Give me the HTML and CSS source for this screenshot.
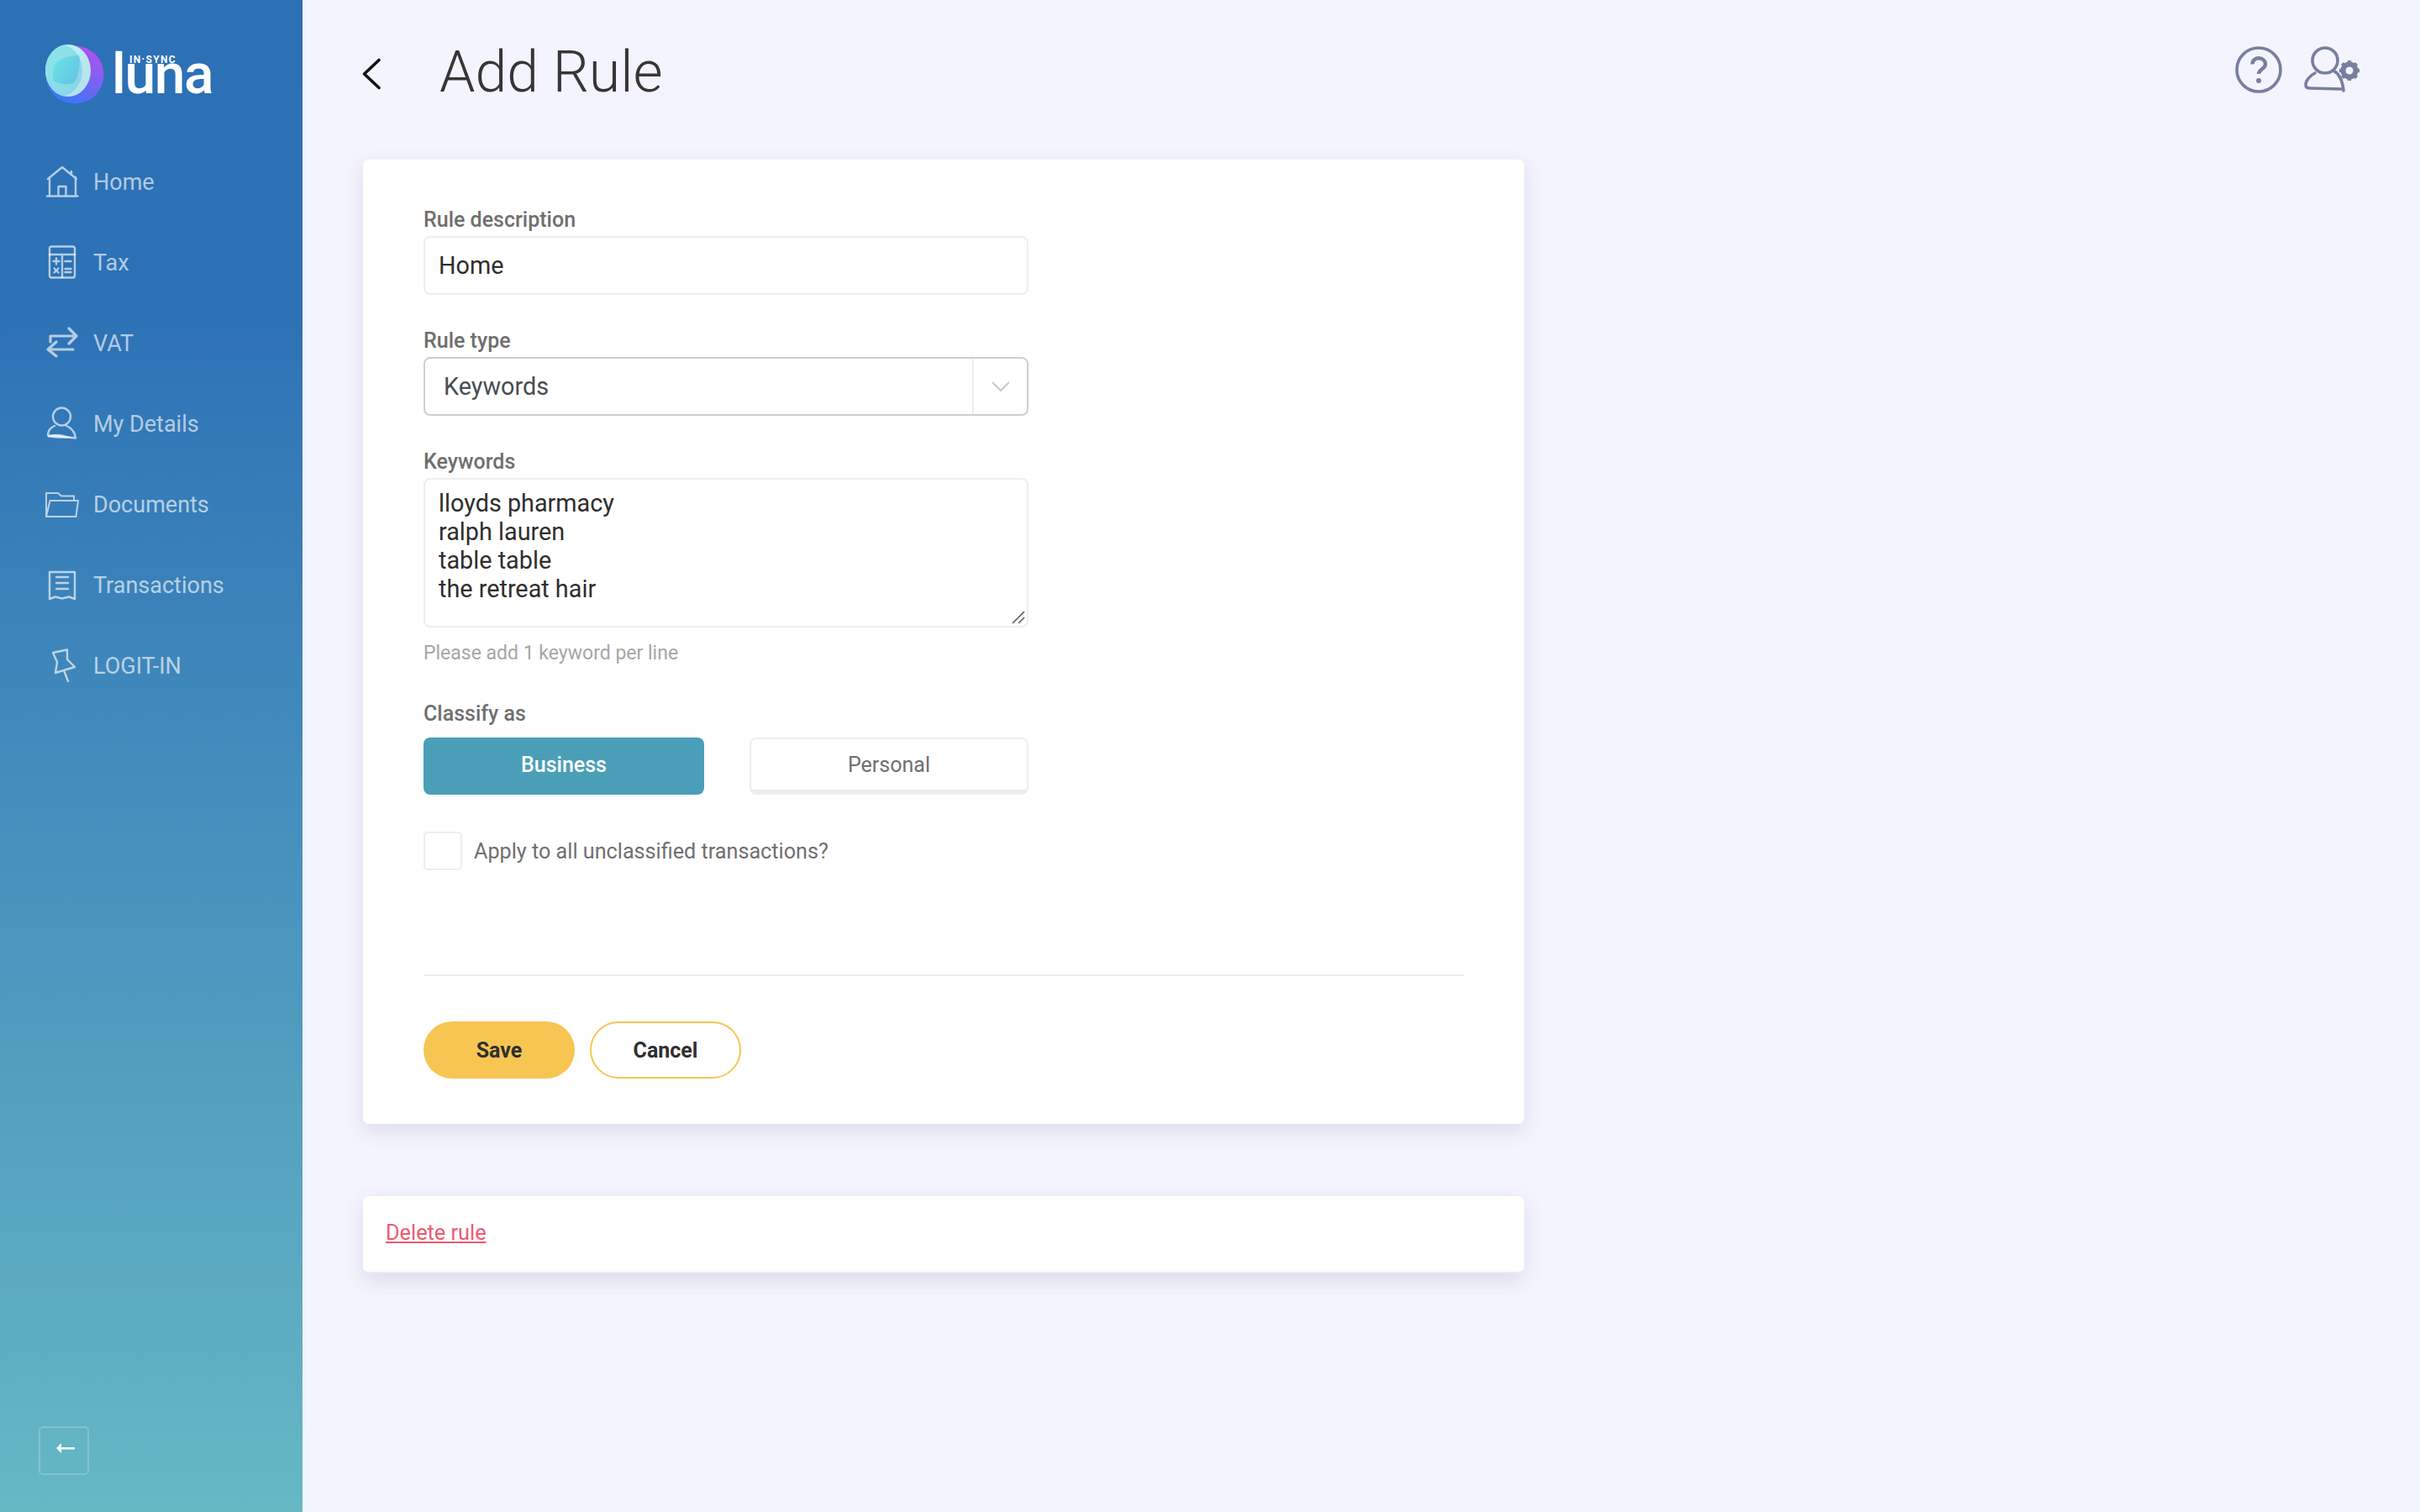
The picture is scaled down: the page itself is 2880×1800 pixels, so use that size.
FILE: index.html
```html
<!DOCTYPE html>
<html lang="en">
<head>
<meta charset="utf-8">
<title>Add Rule</title>
<link rel="stylesheet" href="styles.css">
</head>
<body>
<div class="app">
  <aside class="sidebar">
    <div class="logo">
      <svg class="logo-mark" width="70" height="72" viewBox="0 0 70 72">
        <defs>
          <linearGradient id="lg-moon" x1="0.8" y1="0.1" x2="0.3" y2="1"><stop offset="0" stop-color="#ae52ef"/><stop offset="1" stop-color="#3379f8"/></linearGradient>
          <linearGradient id="lg-a" x1="0.2" y1="0" x2="0.8" y2="1"><stop offset="0" stop-color="#c0f2f3"/><stop offset="1" stop-color="#b4e0ee"/></linearGradient>
          <linearGradient id="lg-b" x1="0" y1="0.2" x2="1" y2="0.9"><stop offset="0" stop-color="#8ce8e8"/><stop offset="1" stop-color="#8ad3ea"/></linearGradient>
          <linearGradient id="lg-c" x1="0" y1="0.2" x2="1" y2="0.9"><stop offset="0" stop-color="#6be2e3"/><stop offset="1" stop-color="#62c3e4"/></linearGradient>
          <clipPath id="lg-clip"><ellipse cx="27" cy="31" rx="27" ry="31"/></clipPath>
        </defs>
        <circle cx="35" cy="36" r="34.5" fill="url(#lg-moon)"/>
        <ellipse cx="27" cy="31" rx="27" ry="31" fill="url(#lg-a)"/>
        <g clip-path="url(#lg-clip)">
          <ellipse cx="17" cy="31" rx="27" ry="31" fill="url(#lg-b)"/>
          <path d="M9 34C9 20 20 14 40 13C42 22 40 36 34 46C26 48 14 48 9 42Z" fill="url(#lg-c)"/>
        </g>
      </svg>
      <div class="logo-word">
        <span class="logo-tag">IN·SYNC</span>
        <span class="logo-name">luna</span>
      </div>
    </div>
    <nav class="nav">
      <a class="nav-item">
        <svg class="nav-icon" viewBox="0 0 40 40"><path d="M3 17L20 3L37 17M31 8V12M5 15V37M36 15V37M2 37.500H38.500M15.500 37V26H24.500V37"/></svg>
        <span class="nav-label">Home</span>
      </a>
      <a class="nav-item">
        <svg class="nav-icon" viewBox="0 0 40 40"><rect x="5" y="1.500" width="30" height="37" rx="2.500"/><path d="M5 11H35M20 11V38M9.500 19H16.500M13 15.500V22.500M23.500 19H30.500M10.500 27.500L15.500 32.500M15.500 27.500L10.500 32.500M23.500 28H30.500M23.500 32H30.500"/></svg>
        <span class="nav-label">Tax</span>
      </a>
      <a class="nav-item">
        <svg class="nav-icon nav-icon-bold" viewBox="0 0 40 40"><path d="M6 19V12H37M28 3L37 12L28 21M33 28H3M13 19L3 28L13 36"/></svg>
        <span class="nav-label">VAT</span>
      </a>
      <a class="nav-item">
        <svg class="nav-icon" viewBox="0 0 40 40"><circle cx="19.500" cy="12" r="10.500"/><path d="M11 23C6 25 3 29 3 34.500C12 35 26 36.500 36 37.500C35 30 30 25 25 23"/><path class="nav-fill" d="M3 34.500C12 31.500 20 32 33 37.500C22 38 10 38 3 36.500Z"/></svg>
        <span class="nav-label">My Details</span>
      </a>
      <a class="nav-item">
        <svg class="nav-icon nav-icon-thin" viewBox="0 0 40 40"><path d="M1 35V7H15L19 10.500H34V16M1 35H36.500L39 16H5.500L1 35Z"/></svg>
        <span class="nav-label">Documents</span>
      </a>
      <a class="nav-item">
        <svg class="nav-icon" viewBox="0 0 40 40"><path d="M5 5H35V37L28 34.500L20 36.500L12 34.500L5 37ZM13 11H27M13 18H27M13 25H27"/></svg>
        <span class="nav-label">Transactions</span>
      </a>
      <a class="nav-item">
        <svg class="nav-icon" viewBox="0 0 40 40"><path d="M9 5L26 1.500V13L35 22L12 29L14 16ZM22 26L27 39"/></svg>
        <span class="nav-label">LOGIT-IN</span>
      </a>
    </nav>
    <button class="collapse" type="button" aria-label="Collapse">
      <svg width="22" height="12" viewBox="0 0 22 12"><path class="collapse-arrow" d="M22 5H6V0L0 6L6 12V7.500H22Z"/></svg>
    </button>
  </aside>

  <main class="main">
    <header class="topbar">
      <a class="back" aria-label="Back">
        <svg width="24" height="38" viewBox="0 0 24 38"><path d="M21 2.500L3.500 19L21 35.500"/></svg>
      </a>
      <h1 class="title">Add Rule</h1>
      <div class="top-icons">
        <svg class="help" width="56" height="56" viewBox="0 0 56 56">
          <circle cx="28" cy="28" r="26"/>
          <path class="help-q" d="M20.500 21.500C20.500 11.500 36 12 36 21.500C36 27 28 27.500 28 33"/>
          <circle class="dot" cx="28" cy="41" r="3"/>
        </svg>
        <svg class="account" width="68" height="56" viewBox="0 0 68 56">
          <circle cx="25" cy="17" r="15"/>
          <path d="M13 32C7 35 2 41 2 46C2 49 4 50 7 50L44 51"/>
          <path d="M35 29C42 33 46 41 47 53"/>
          <circle class="gear-ring" cx="54" cy="29" r="7.500"/>
          <path class="gear-teeth" d="M54 17V21M54 37V41M42 29H46M62 29H66M45.500 20.500L48.300 23.300M59.700 34.700L62.500 37.500M45.500 37.500L48.300 34.700M59.700 23.300L62.500 20.500"/>
        </svg>
      </div>
    </header>

    <section class="card form-card">
      <div class="field field-first">
        <label class="label" for="desc">Rule description</label>
        <input class="text-input" id="desc" type="text" value="Home">
      </div>
      <div class="field">
        <div class="label">Rule type</div>
        <div class="select">
          <span class="select-value">Keywords</span>
          <span class="select-arrow">
            <svg width="24" height="14" viewBox="0 0 24 14"><path d="M2 2L12 12L22 2"/></svg>
          </span>
        </div>
      </div>
      <div class="field">
        <label class="label" for="kw">Keywords</label>
        <div class="area-wrap">
          <textarea class="text-area" id="kw">lloyds pharmacy
ralph lauren
table table
the retreat hair</textarea>
          <svg class="grip" width="16" height="16" viewBox="0 0 16 16"><path d="M1 15L15 1M8 15L15 8"/></svg>
        </div>
        <div class="hint">Please add 1 keyword per line</div>
      </div>
      <div class="field field-classify">
        <div class="label">Classify as</div>
        <div class="toggle">
          <button class="toggle-btn toggle-on" type="button">Business</button>
          <button class="toggle-btn toggle-off" type="button">Personal</button>
        </div>
      </div>
      <label class="check-row">
        <span class="check-box"></span>
        <span class="check-text">Apply to all unclassified transactions?</span>
      </label>
      <hr class="rule">
      <div class="actions">
        <button class="btn btn-save" type="button">Save</button>
        <button class="btn btn-cancel" type="button">Cancel</button>
      </div>
    </section>

    <section class="card delete-card">
      <a class="delete-link" href="#">Delete rule</a>
    </section>
  </main>
</div>
</body>
</html>
```

FILE: styles.css
```css
* { box-sizing: border-box; }
html, body { margin: 0; padding: 0; height: 100%; }
body {
  background: #f3f4fd;
  font-family: Roboto, "Liberation Sans", sans-serif;
  color: #333;
}
.app { display: flex; height: 1800px; overflow: hidden; }

/* Sidebar */
.sidebar {
  width: 360px;
  flex: none;
  display: flex;
  flex-direction: column;
  padding-bottom: 44px;
  background: linear-gradient(180deg, #2c70b6 0%, #2d71b6 20%, #66b8c5 100%);
}
.logo {
  display: flex;
  align-items: flex-start;
  height: 168px;
  padding: 53px 0 0 54px;
}
.logo-mark { flex: none; }
.logo-word {
  position: relative;
  margin-left: 9px;
  color: #fff;
  height: 70px;
}
.logo-name {
  display: block;
  font-family: Roboto, sans-serif;
  font-size: 66px;
  line-height: 70px;
  font-weight: 500;
  letter-spacing: -1.4px;
  margin-top: 1px;
}
.logo-tag {
  position: absolute;
  left: 21px;
  top: 12px;
  font-family: Roboto, sans-serif;
  font-size: 12px;
  line-height: 12px;
  font-weight: 700;
  letter-spacing: 1.3px;
  white-space: nowrap;
}
.nav { display: flex; flex-direction: column; }
.nav-item {
  height: 96px;
  display: flex;
  align-items: center;
  gap: 17px;
  padding-left: 54px;
  font-size: 27px;
  color: rgba(255, 255, 255, 0.65);
}
.nav-label { padding-top: 2px; }
.nav-icon {
  width: 40px;
  height: 40px;
  flex: none;
  fill: none;
  stroke: rgba(255, 255, 255, 0.65);
  stroke-width: 2.4;
  stroke-linecap: round;
  stroke-linejoin: round;
}
.nav-icon-bold { stroke-width: 3.2; }
.nav-icon-thin { stroke-width: 2; }
.nav-fill { fill: rgba(255, 255, 255, 0.65); stroke: none; }
.collapse {
  margin: auto 0 0 46px;
  width: 60px;
  height: 58px;
  padding: 0 0 6px 3px;
  display: flex;
  align-items: center;
  justify-content: center;
  background: transparent;
  border: 2px solid rgba(255, 255, 255, 0.2);
  border-radius: 5px;
}
.collapse-arrow { fill: #fff; }

/* Main */
.main { flex: 1; min-width: 0; padding-left: 72px; }
.topbar {
  height: 190px;
  display: flex;
  align-items: flex-start;
}
.back {
  width: 90px;
  padding-top: 69px;
  margin-left: -2px;
  margin-right: 3px;
  line-height: 0;
}
.back path {
  fill: none;
  stroke: #111;
  stroke-width: 3.6;
  stroke-linecap: round;
  stroke-linejoin: round;
}
.title {
  margin: 0;
  padding-top: 45px;
  font-size: 68px;
  line-height: 82px;
  font-weight: 300;
  color: #363636;
}
.top-icons {
  margin-left: auto;
  margin-right: 70px;
  padding-top: 55px;
  display: flex;
  gap: 26px;
}
.help, .account {
  fill: none;
  stroke: #787f9e;
  stroke-width: 3.6;
  stroke-linecap: round;
  stroke-linejoin: round;
}
.help .dot { fill: #787f9e; stroke: none; }
.help-q { stroke-width: 4.4; stroke-linecap: butt; }
.gear-ring { stroke-width: 6; }
.gear-teeth { stroke-width: 4.5; stroke-linecap: butt; }

.card {
  width: 1382px;
  background: #fff;
  border-radius: 7px;
  box-shadow: 0 8px 24px rgba(60, 65, 110, 0.13);
}
.form-card {
  height: 1148px;
  padding: 57px 72px 0;
}
.field { width: 720px; margin-bottom: 40px; }
.label {
  display: block;
  font-size: 25px;
  line-height: 30px;
  font-weight: 500;
  color: #6f6f6f;
  margin-bottom: 4px;
}
.text-input {
  display: block;
  width: 100%;
  height: 70px;
  padding: 0 16px;
  font: 400 28.800px Roboto, sans-serif;
  color: #2e2e2e;
  background: #fff;
  border: 2px solid #eeeeee;
  border-radius: 8px;
  outline: none;
}
.select {
  display: flex;
  align-items: center;
  height: 70px;
  border: 2px solid #c9d0d6;
  border-radius: 8px;
}
.select-value {
  flex: 1;
  padding-left: 22px;
  font-size: 28.800px;
  color: #484d52;
}
.select-arrow {
  width: 65px;
  height: 100%;
  border-left: 2px solid #eceef0;
  display: flex;
  align-items: center;
  justify-content: center;
  line-height: 0;
}
.select-arrow path { fill: none; stroke: #c4cbd1; stroke-width: 2; }
.area-wrap { position: relative; }
.text-area {
  display: block;
  width: 100%;
  height: 178px;
  padding: 11px 16px;
  font: 400 28.800px/34px Roboto, sans-serif;
  color: #2e2e2e;
  background: #fff;
  border: 2px solid #eeeeee;
  border-radius: 8px;
  outline: none;
  resize: none;
  overflow: hidden;
}
.grip {
  position: absolute;
  right: 4px;
  bottom: 4px;
}
.grip path { fill: none; stroke: #555; stroke-width: 1.5; }
.hint {
  margin-top: 16px;
  font-size: 23px;
  line-height: 30px;
  color: #a6a6a6;
}
.field-classify { margin-top: 42px; margin-bottom: 44px; }
.field-classify .label { margin-bottom: 13px; }
.toggle { display: flex; justify-content: space-between; }
.toggle-btn {
  height: 68px;
  font: 500 25px Roboto, sans-serif;
  border-radius: 8px;
}
.toggle-on {
  width: 334px;
  color: #fff;
  background: #4b9eb8;
  border: 0;
  padding-bottom: 4px;
}
.toggle-off {
  width: 332px;
  font-weight: 400;
  color: #6f6f6f;
  background: #fff;
  border: 2px solid #eeeeee;
  border-bottom-width: 6px;
}
.check-row {
  display: flex;
  align-items: center;
  gap: 14px;
  height: 46px;
}
.check-box {
  width: 46px;
  height: 46px;
  border: 2px solid #eeeeee;
  border-radius: 5px;
  background: #fff;
}
.check-text { font-size: 25.200px; color: #6f6f6f; }
.rule {
  margin: 124px 0 0;
  border: 0;
  height: 2px;
  background: #eeeeee;
}
.actions {
  display: flex;
  gap: 18px;
  margin-top: 54px;
}
.btn {
  width: 180px;
  height: 68px;
  border-radius: 34px;
  font: 700 25px Roboto, sans-serif;
  color: #2f2f2f;
}
.btn-save { background: #f7c552; border: 0; }
.btn-cancel { background: #fff; border: 2px solid #f7c552; }

.delete-card {
  height: 92px;
  margin-top: 86px;
  padding: 29px 27px 0;
  border-bottom: 2px solid #ececec;
}
.delete-link {
  font-size: 25.300px;
  line-height: 30px;
  color: #f0596e;
  text-decoration: underline;
}
```
